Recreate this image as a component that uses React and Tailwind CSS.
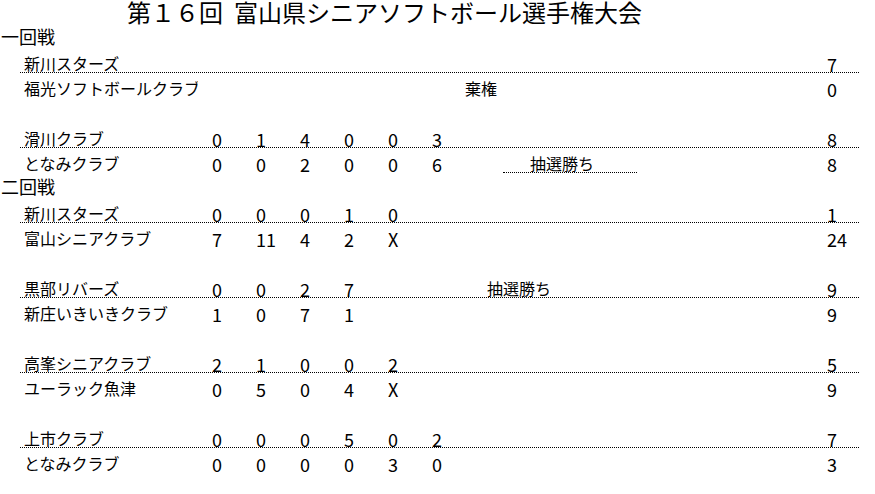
import React from "react";

const rows = [
  { head: "一回戦" },
  { name: "新川スターズ", scores: [], total: "7", line: true },
  { name: "福光ソフトボールクラブ", clip: true, scores: [], extra: { text: "棄権", kind: "plain3" }, total: "0" },
  { blank: true },
  { name: "滑川クラブ", scores: ["0", "1", "4", "0", "0", "3"], total: "8", line: true },
  { name: "となみクラブ", scores: ["0", "0", "2", "0", "0", "6"], extra: { text: "抽選勝ち", kind: "boxed" }, total: "8" },
  { head: "二回戦" },
  { name: "新川スターズ", scores: ["0", "0", "0", "1", "0"], total: "1", line: true },
  { name: "富山シニアクラブ", scores: ["7", "11", "4", "2", "X"], total: "24" },
  { blank: true },
  { name: "黒部リバーズ", scores: ["0", "0", "2", "7"], extra: { text: "抽選勝ち", kind: "plain25" }, total: "9", line: true },
  { name: "新庄いきいきクラブ", scores: ["1", "0", "7", "1"], total: "9" },
  { blank: true },
  { name: "高峯シニアクラブ", scores: ["2", "1", "0", "0", "2"], total: "5", line: true },
  { name: "ユーラック魚津", scores: ["0", "5", "0", "4", "X"], total: "9" },
  { blank: true },
  { name: "上市クラブ", scores: ["0", "0", "0", "5", "0", "2"], total: "7", line: true },
  { name: "となみクラブ", scores: ["0", "0", "0", "0", "3", "0"], total: "3" },
];

function Extra({ extra }) {
  if (!extra) {
    return <div className="w-[361px] h-full" />;
  }
  if (extra.kind === "boxed") {
    return (
      <div className="w-[361px] h-[25px] flex">
        <div className="w-[41px] h-full" />
        <div className="w-[134px] h-full border-b border-dotted border-black flex items-end pl-[27px] pb-[1px]">
          <span className="block text-[16px] leading-4 whitespace-nowrap">{extra.text}</span>
        </div>
      </div>
    );
  }
  const pl = extra.kind === "plain3" ? "pl-[3px]" : "pl-[25px]";
  return (
    <div className={`w-[361px] h-full flex items-end pb-[1px] ${pl}`}>
      <span className="block text-[16px] leading-4 whitespace-nowrap">{extra.text}</span>
    </div>
  );
}

function Row({ r }) {
  if (r.head) {
    return (
      <div className="h-[25px] flex items-end pb-[3px] pl-[1px]">
        <span className="block text-[18px] leading-[18px] whitespace-nowrap">{r.head}</span>
      </div>
    );
  }
  if (r.blank) {
    return <div className="h-[25px]" />;
  }
  const b = r.line ? "border-black" : "border-transparent";
  const scores = [0, 1, 2, 3, 4, 5].map((i) => r.scores[i] ?? "");
  return (
    <div className="h-[25px] flex">
      <div className="w-[20px] h-full" />
      <div className={`flex h-full border-b border-dotted ${b}`}>
        <div className={`w-[178px] h-full flex items-end pb-[1px] pl-[4px] ${r.clip ? "overflow-x-clip" : ""}`}>
          <span className="block text-[16px] leading-4 whitespace-nowrap">{r.name}</span>
        </div>
        {scores.map((s, i) => (
          <div key={i} className="w-[44px] h-full flex items-end pl-[14px]">
            <span className="block text-[18px] leading-4 whitespace-nowrap">{s}</span>
          </div>
        ))}
        <Extra extra={r.extra} />
        <div className="w-[36px] h-full flex items-end pl-[4px]">
          <span className="block text-[18px] leading-4 whitespace-nowrap">{r.total}</span>
        </div>
      </div>
    </div>
  );
}

export default function App() {
  return (
    <div className="w-[875px] h-[494px] bg-white text-black overflow-hidden font-['Noto_Sans_CJK_JP',sans-serif]">
      <div className="h-[23px] pl-[127px] text-[24px] leading-[23px] whitespace-nowrap flex">
        <span className="block">第１６回</span>
        <span className="block ml-[11px]">富山県シニアソフトボール選手権大会</span>
      </div>
      {rows.map((r, i) => (
        <Row key={i} r={r} />
      ))}
    </div>
  );
}
